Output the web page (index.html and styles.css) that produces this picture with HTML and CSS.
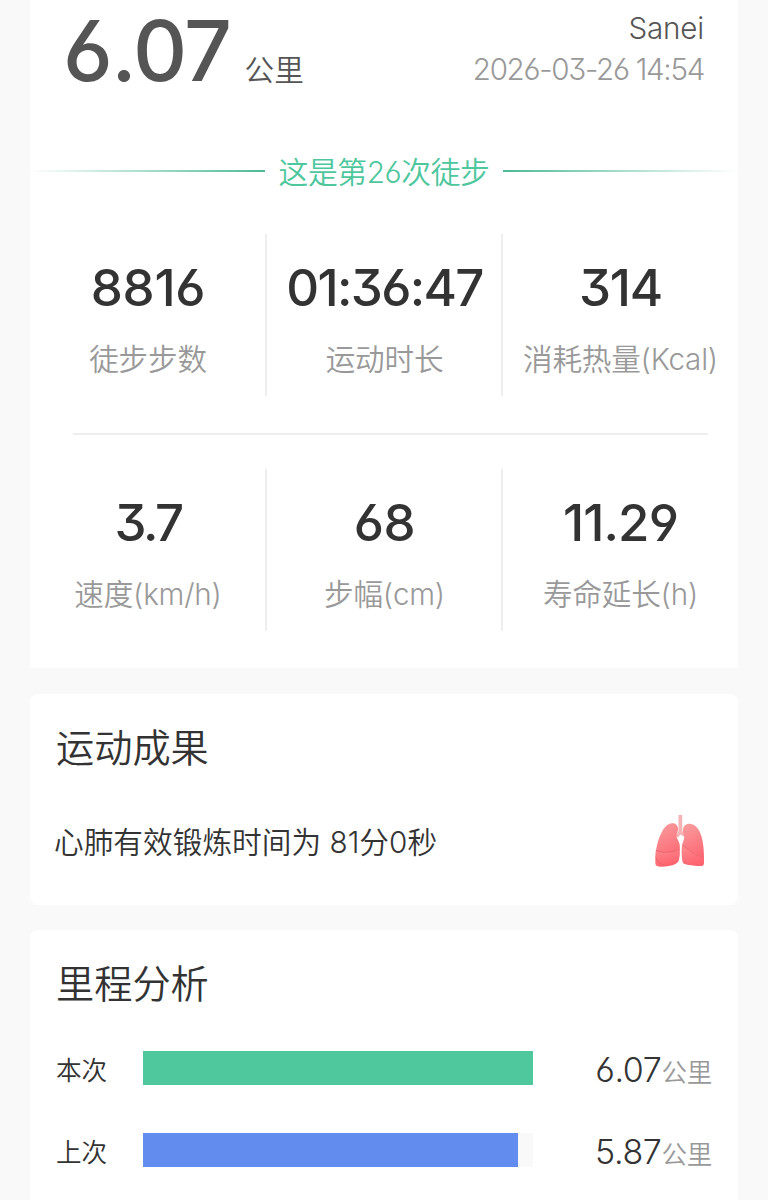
FILE: index.html
```
<!DOCTYPE html>
<html lang="zh-CN">
<head>
<meta charset="utf-8">
<title>徒步</title>
<link rel="stylesheet" href="styles.css">
</head>
<body>
<main class="page">
  <section class="card summary">
    <header class="head">
      <div class="distance"><span class="distance-value">6.07</span><span class="distance-unit">公里</span></div>
      <div class="meta"><div class="user">Sanei</div><div class="date">2026-03-26 14:54</div></div>
    </header>
    <div class="count"><i class="rule rule-left"></i><span class="count-text">这是第26次徒步</span><i class="rule rule-right"></i></div>
    <div class="stats">
      <div class="stat"><b class="num">8816</b><span class="label">徒步步数</span></div>
      <div class="stat"><b class="num time">01:36:47</b><span class="label">运动时长</span></div>
      <div class="stat"><b class="num calories">314</b><span class="label">消耗热量(Kcal)</span></div>
    </div>
    <hr class="line">
    <div class="stats">
      <div class="stat"><b class="num speed">3.7</b><span class="label">速度(km/h)</span></div>
      <div class="stat"><b class="num">68</b><span class="label">步幅(cm)</span></div>
      <div class="stat"><b class="num life">11.29</b><span class="label">寿命延长(h)</span></div>
    </div>
  </section>
  <section class="card result">
    <h2 class="title">运动成果</h2>
    <div class="result-row">
      <p class="result-text">心肺有效锻炼时间为 81分0秒</p>
      <svg class="lungs" viewBox="42 42 150 156">
        <defs>
          <linearGradient id="lobe" x1="0" y1="0" x2="0.3" y2="1">
            <stop offset="0" stop-color="#f9a0a0"/><stop offset="0.55" stop-color="#fb7f86"/><stop offset="1" stop-color="#fd6672"/>
          </linearGradient>
          <linearGradient id="lobe2" x1="0" y1="0" x2="0.4" y2="1">
            <stop offset="0" stop-color="#fb8c90"/><stop offset="1" stop-color="#fe6470"/>
          </linearGradient>
        </defs>
        <path d="M114 45h11v47l9 10-4 7-9-7-9 9-6-5 8-13z" fill="#f5b3b5"/>
        <path d="M95 69c11-1 18 7 18 19-2 8-6 14-4 23 3 9 9 14 9 27 0 19 0 34-4 43-6 10-25 16-49 16-13 0-19-3-19-11-1-35 6-69 22-97 8-12 17-20 27-20z" fill="url(#lobe)"/>
        <path d="M47 148c16 7 30 6 43 6 12 0 19-7 26-11 2 26-1 42-17 47-8 3-20 4-29 3-11-5-18-13-23-22z" fill="url(#lobe2)"/>
        <path d="M48 149c18 8 33 5 46 4 10-1 15-4 21-8M47 170c5 11 14 20 26 23" fill="none" stroke="#e95e6b" stroke-width="2.5"/>
        <path d="M146 71c14 0 25 10 33 29 8 21 11 51 10 86 0 6-3 9-9 9-23 0-46-3-53-9-4-16-4-31-3-49 1-11 7-16 7-27 0-8-5-13-4-21 1-11 8-18 19-18z" fill="url(#lobe)"/>
        <path d="M125 137c13 4 18 15 31 22 13 7 23 9 32 12 1 11 1 20-4 23-20 1-47-2-56-9-4-13-4-29-3-48z" fill="url(#lobe2)"/>
        <path d="M127 136c14 5 21 16 34 23 10 6 18 8 27 10" fill="none" stroke="#ed6a75" stroke-width="2.5"/>
      </svg>
    </div>
  </section>
  <section class="card analysis">
    <h2 class="title">里程分析</h2>
    <div class="bar-row"><span class="bar-label">本次</span><div class="track"><div class="fill current" style="width:100%"></div></div><div class="bar-value">6.07<small class="bar-unit">公里</small></div></div>
    <div class="bar-row"><span class="bar-label">上次</span><div class="track"><div class="fill previous" style="width:96.1%"></div></div><div class="bar-value">5.87<small class="bar-unit">公里</small></div></div>
  </section>
</main>
</body>
</html>
```
FILE: styles.css
```
* { box-sizing: border-box; margin: 0; padding: 0; }
body {
  background: #f9f9f9;
  color: #333;
  font-family: Inter, "Noto Sans CJK SC", sans-serif;
  font-weight: 350;
  font-feature-settings: "cv03", "cv04", "cv09";
  overflow: hidden;
}
.page { height: 1200px; padding: 0 30px; overflow: hidden; display: flex; flex-direction: column; }
.card { background: #fff; border-radius: 8px; flex: none; white-space: nowrap; }
.summary { height: 668px; border-radius: 0; margin-bottom: 26px; }
.head { display: flex; justify-content: space-between; height: 151px; padding: 0 34px 0 33px; }
.distance { display: flex; color: #555; }
.distance-value { font-size: 84px; line-height: 102px; font-weight: 500; letter-spacing: -1.5px; }
.distance-unit { font-size: 29.6px; line-height: 40px; padding-top: 50px; margin-left: 14px; }
.meta { text-align: right; font-size: 29.6px; line-height: 41px; padding-top: 8px; }
.user { color: #555; letter-spacing: -0.2px; }
.date { color: #999; letter-spacing: -1.3px; }
.count { display: flex; align-items: center; justify-content: space-between; height: 40px; margin-bottom: 43px; color: #4ec79d; }
.count-text { font-size: 29.8px; line-height: 40px; letter-spacing: -0.4px; padding-top: 2px; }
.rule { width: 235px; height: 2px; }
.rule-left { background: linear-gradient(to left, #4dba93, rgba(77, 186, 147, 0)); }
.rule-right { background: linear-gradient(to right, #4dba93, rgba(77, 186, 147, 0)); }
.stats { display: grid; grid-template-columns: repeat(3, 236px); height: 162px; }
.stat { display: flex; flex-direction: column; align-items: center; padding-top: 23px; }
.stat + .stat { border-left: 2px solid #eee; margin-left: -1px; }
.num { font-size: 51px; line-height: 62px; font-weight: 450; letter-spacing: -0.3px; }
.time { letter-spacing: -1.7px; }
.calories { letter-spacing: -1.3px; }
.life { letter-spacing: -0.9px; }
.speed { letter-spacing: -2.5px; }
.label { font-size: 29.6px; line-height: 40px; margin-top: 20px; color: #999; letter-spacing: -0.2px; }
.line { border: 0; height: 2px; background: #eee; margin: 37px 30px 34px 43px; }
.result { height: 211px; margin-bottom: 25px; padding: 29px 33px 0 26px; }
.title { font-size: 38.2px; line-height: 50px; font-weight: 350; }
.result-row { display: flex; justify-content: space-between; align-items: center; height: 52px; margin-top: 41px; }
.result-text { font-size: 29.7px; line-height: 40px; padding-top: 3px; margin-left: -2px; }
.lungs { width: 51px; height: 53px; }
.analysis { height: 280px; padding: 29px 26px 0 26px; }
.bar-row { display: flex; align-items: center; height: 35px; margin-bottom: 47px; }
.title + .bar-row { margin-top: 41px; }
.bar-label { width: 87px; font-size: 25.6px; line-height: 40px; padding-top: 7px; }
.track { width: 390px; height: 34px; background: #f9f9f9; }
.fill { height: 34px; }
.current { background: #50c89e; }
.previous { background: #628dee; }
.bar-value { flex: 1; text-align: right; font-size: 34px; line-height: 40px; padding-top: 8px; letter-spacing: -0.4px; }
.bar-unit { font-size: 25.6px; color: #999; letter-spacing: -0.3px; }
```
